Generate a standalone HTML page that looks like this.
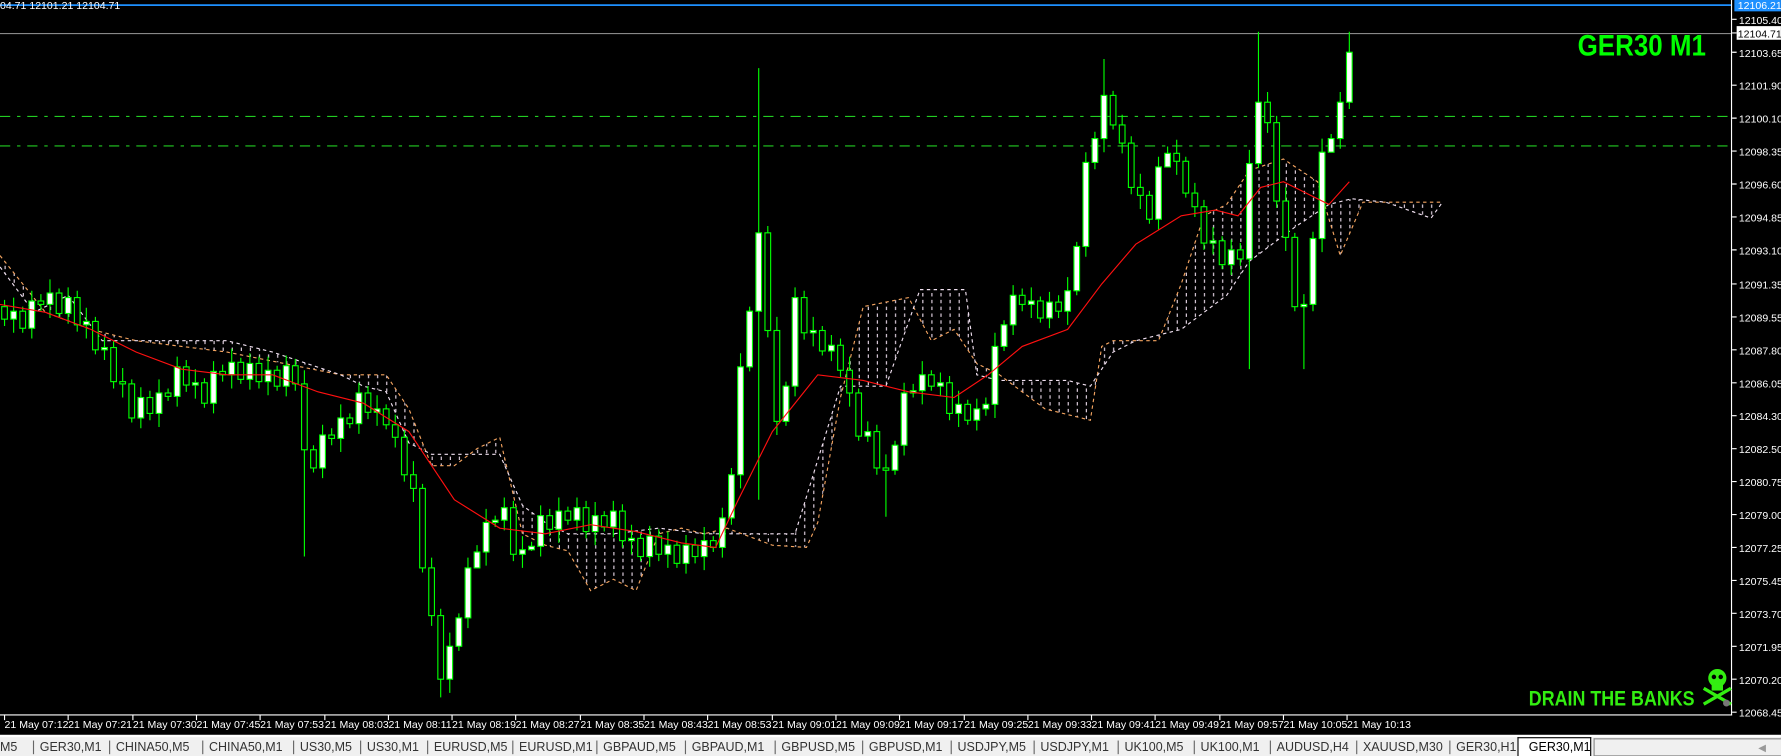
<!DOCTYPE html>
<html><head><meta charset="utf-8"><style>
body{margin:0;background:#000;width:1781px;height:754px;overflow:hidden;font-family:"Liberation Sans",sans-serif}
#w{position:absolute;left:0;top:0;width:1568px;height:664px;transform:scale(1.1358);transform-origin:0 0}
svg{position:absolute;left:0;top:0}
#tabs{position:absolute;left:0;top:647px;width:1568px;height:17px;background:#f0f0f0;border-top:2px solid #fff}
.t{position:absolute;top:1px;font-size:11px;color:#333;height:16px;line-height:16px;white-space:nowrap}
.s{position:absolute;top:3px;width:1px;height:12px;background:#666}
.ax text{fill:#fff;font-size:9.3px;font-family:"Liberation Sans",sans-serif}
.cd rect{stroke:#00ff00;stroke-width:1;fill:#000}
.cd rect.u{fill:#fff}
</style></head><body><div id="w">
<svg width="1568" height="648" xmlns="http://www.w3.org/2000/svg">
<defs><pattern id="h" width="8" height="6" patternUnits="userSpaceOnUse"><rect x="4" y="0" width="1" height="3" fill="#e8d8e8"/></pattern></defs>
<line x1="0" y1="4.5" x2="1524" y2="4.5" stroke="#1e90ff" stroke-width="1.5"/>
<line x1="0" y1="29.5" x2="1524" y2="29.5" stroke="#888"/>
<line x1="0" y1="102.5" x2="1524" y2="102.5" stroke="#22cc22" stroke-dasharray="9,6,3,6"/>
<line x1="0" y1="128.5" x2="1524" y2="128.5" stroke="#22cc22" stroke-dasharray="9,6,3,6"/>
<polygon fill="url(#h)" points="0,225 20,250 40,275 80,290 120,300 200,310 260,322 300,330 340,330 360,360 380,410 400,410 420,395 440,385 460,470 480,480 500,485 520,520 540,510 560,520 580,470 600,465 620,470 640,465 680,480 710,482 720,460 740,350 760,270 800,262 820,300 840,290 860,320 880,330 920,360 960,370 970,305 980,300 1020,300 1040,250 1060,190 1080,180 1100,150 1130,140 1160,160 1180,225 1200,178 1250,178 1270,178 1260,192 1220,178 1190,175 1170,180 1140,200 1100,230 1080,260 1040,290 1000,300 980,310 960,340 940,335 880,335 860,330 850,255 810,255 780,340 740,340 700,470 650,470 620,470 580,465 540,470 500,470 480,460 460,445 440,400 400,400 380,400 360,390 340,345 320,340 300,330 270,320 240,310 200,300 90,300 60,260 30,275 0,235"/>
<polyline fill="none" stroke="#f4a460" stroke-dasharray="3,3" points="0,225 20,250 40,275 80,290 120,300 200,310 260,322 300,330 340,330 360,360 380,410 400,410 420,395 440,385 460,470 480,480 500,485 520,520 540,510 560,520 580,470 600,465 620,470 640,465 680,480 710,482 720,460 740,350 760,270 800,262 820,300 840,290 860,320 880,330 920,360 960,370 970,305 980,300 1020,300 1040,250 1060,190 1080,180 1100,150 1130,140 1160,160 1180,225 1200,178 1250,178 1270,178"/>
<polyline fill="none" stroke="#f0e0f0" stroke-dasharray="3,3" points="0,235 30,275 60,260 90,300 200,300 240,310 270,320 300,330 320,340 340,345 360,390 380,400 400,400 440,400 460,445 480,460 500,470 540,470 580,465 620,470 650,470 700,470 740,340 780,340 810,255 850,255 860,330 880,335 940,335 960,340 980,310 1000,300 1040,290 1080,260 1100,230 1140,200 1170,180 1190,175 1220,178 1260,192 1270,178"/>
<path stroke="#00ff00" stroke-width="1" fill="none" d="M4 264V287M12 262V293M20 270V293M28 256V298M36 259V274M44 246V280M52 254V280M60 253V285M68 256V292M76 271V298M84 279V312M92 297V317M100 300V342M108 324V350M116 334V372M124 341V377M132 344V370M140 334V376M148 342V353M156 314V358M164 317V345M172 325V351M180 333V359M188 318V364M196 321V336M204 307V342M212 315V338M220 311V343M228 314V342M236 314V348M244 322V344M252 313V349M260 316V344M268 326V490M276 392V416M284 374V421M292 377V392M300 356V398M308 364V377M316 337V382M324 340V369M332 348V375M340 356V378M348 365V394M356 379V424M364 406V442M372 426V504M380 491V551M388 536V614M396 557V610M404 540V573M412 491V553M420 480V492M428 448V498M436 454V464M444 438V467M452 441V494M460 472V500M468 477V485M476 445V490M484 448V472M492 438V478M500 446V462M508 438V467M516 441V474M524 442V480M532 450V468M540 441V473M548 444V482M556 462V488M564 470V494M572 463V499M580 466V494M588 468V500M596 476V500M604 471V505M612 474V496M620 464V502M628 472V486M636 447V491M644 412V462M652 311V430M660 270V327M668 60V440M676 199V297M684 279V383M692 336V375M700 253V349M708 256V299M716 279V305M724 287V313M732 295V318M740 298V332M748 314V358M756 342V388M764 371V389M772 374V418M780 400V455M788 388V418M796 337V401M804 338V350M812 318V356M820 326V344M828 328V349M836 331V370M844 344V376M852 352V374M860 351V379M868 350V366M876 293V368M884 282V309M892 251V295M900 254V274M908 253V280M916 261V284M924 257V289M932 260V280M940 244V286M948 213V260M956 134V226M964 116V149M972 52V134M980 80V114M988 101V135M996 120V171M1004 153V184M1012 168V197M1020 138V202M1028 129V141M1036 123V154M1044 138V174M1052 161V191M1060 176V220M1068 200V224M1076 208V237M1084 211V242M1092 214V234M1100 132V325M1108 28V148M1116 81V117M1124 102V183M1132 165V221M1140 205V274M1148 259V325M1156 204V274M1164 122V222M1172 118V126M1180 81V131M1188 28V96"/>
<g class="cd">
<rect x="1.5" y="270" width="5" height="11"/><rect class="u" x="9.5" y="274" width="5" height="7"/><rect x="17.5" y="274" width="5" height="15"/><rect class="u" x="25.5" y="265" width="5" height="24"/><rect x="33.5" y="265" width="5" height="3"/><rect class="u" x="41.5" y="258" width="5" height="10"/><rect x="49.5" y="258" width="5" height="18"/><rect class="u" x="57.5" y="262" width="5" height="14"/><rect x="65.5" y="262" width="5" height="24"/><rect class="u" x="73.5" y="283" width="5" height="3"/><rect x="81.5" y="283" width="5" height="25"/><rect class="u" x="89.5" y="306" width="5" height="2"/><rect x="97.5" y="306" width="5" height="30"/><rect x="105.5" y="336" width="5" height="2"/><rect x="113.5" y="338" width="5" height="30"/><rect class="u" x="121.5" y="350" width="5" height="18"/><rect x="129.5" y="350" width="5" height="14"/><rect class="u" x="137.5" y="346" width="5" height="18"/><rect x="145.5" y="346" width="5" height="3"/><rect class="u" x="153.5" y="323" width="5" height="26"/><rect x="161.5" y="323" width="5" height="16"/><rect class="u" x="169.5" y="337" width="5" height="2"/><rect x="177.5" y="337" width="5" height="18"/><rect class="u" x="185.5" y="327" width="5" height="28"/><rect x="193.5" y="327" width="5" height="3"/><rect class="u" x="201.5" y="319" width="5" height="11"/><rect x="209.5" y="319" width="5" height="15"/><rect class="u" x="217.5" y="320" width="5" height="14"/><rect x="225.5" y="320" width="5" height="16"/><rect class="u" x="233.5" y="326" width="5" height="10"/><rect x="241.5" y="326" width="5" height="14"/><rect class="u" x="249.5" y="322" width="5" height="18"/><rect x="257.5" y="322" width="5" height="16"/><rect x="265.5" y="338" width="5" height="58"/><rect x="273.5" y="396" width="5" height="16"/><rect class="u" x="281.5" y="383" width="5" height="29"/><rect x="289.5" y="383" width="5" height="3"/><rect class="u" x="297.5" y="368" width="5" height="18"/><rect x="305.5" y="368" width="5" height="5"/><rect class="u" x="313.5" y="346" width="5" height="27"/><rect x="321.5" y="346" width="5" height="17"/><rect class="u" x="329.5" y="360" width="5" height="3"/><rect x="337.5" y="360" width="5" height="14"/><rect x="345.5" y="374" width="5" height="11"/><rect x="353.5" y="385" width="5" height="33"/><rect x="361.5" y="418" width="5" height="12"/><rect x="369.5" y="430" width="5" height="70"/><rect x="377.5" y="500" width="5" height="42"/><rect x="385.5" y="542" width="5" height="56"/><rect class="u" x="393.5" y="569" width="5" height="29"/><rect class="u" x="401.5" y="544" width="5" height="25"/><rect class="u" x="409.5" y="500" width="5" height="44"/><rect class="u" x="417.5" y="486" width="5" height="14"/><rect class="u" x="425.5" y="460" width="5" height="26"/><rect class="u" x="433.5" y="458" width="5" height="2"/><rect class="u" x="441.5" y="447" width="5" height="11"/><rect x="449.5" y="447" width="5" height="41"/><rect class="u" x="457.5" y="484" width="5" height="4"/><rect class="u" x="465.5" y="481" width="5" height="3"/><rect class="u" x="473.5" y="454" width="5" height="27"/><rect x="481.5" y="454" width="5" height="12"/><rect class="u" x="489.5" y="450" width="5" height="16"/><rect x="497.5" y="450" width="5" height="8"/><rect class="u" x="505.5" y="447" width="5" height="11"/><rect x="513.5" y="447" width="5" height="21"/><rect class="u" x="521.5" y="454" width="5" height="14"/><rect x="529.5" y="454" width="5" height="10"/><rect class="u" x="537.5" y="450" width="5" height="14"/><rect x="545.5" y="450" width="5" height="26"/><rect class="u" x="553.5" y="474" width="5" height="2"/><rect x="561.5" y="474" width="5" height="16"/><rect class="u" x="569.5" y="472" width="5" height="18"/><rect x="577.5" y="472" width="5" height="16"/><rect class="u" x="585.5" y="480" width="5" height="8"/><rect x="593.5" y="480" width="5" height="16"/><rect class="u" x="601.5" y="480" width="5" height="16"/><rect x="609.5" y="480" width="5" height="10"/><rect class="u" x="617.5" y="476" width="5" height="14"/><rect x="625.5" y="476" width="5" height="6"/><rect class="u" x="633.5" y="456" width="5" height="26"/><rect class="u" x="641.5" y="418" width="5" height="38"/><rect class="u" x="649.5" y="323" width="5" height="95"/><rect class="u" x="657.5" y="274" width="5" height="49"/><rect class="u" x="665.5" y="205" width="5" height="69"/><rect x="673.5" y="205" width="5" height="86"/><rect x="681.5" y="291" width="5" height="80"/><rect class="u" x="689.5" y="340" width="5" height="31"/><rect class="u" x="697.5" y="262" width="5" height="78"/><rect x="705.5" y="262" width="5" height="31"/><rect class="u" x="713.5" y="291" width="5" height="2"/><rect x="721.5" y="291" width="5" height="18"/><rect class="u" x="729.5" y="304" width="5" height="5"/><rect x="737.5" y="304" width="5" height="22"/><rect x="745.5" y="326" width="5" height="20"/><rect x="753.5" y="346" width="5" height="38"/><rect class="u" x="761.5" y="380" width="5" height="4"/><rect x="769.5" y="380" width="5" height="32"/><rect x="777.5" y="412" width="5" height="2"/><rect class="u" x="785.5" y="392" width="5" height="22"/><rect class="u" x="793.5" y="346" width="5" height="46"/><rect class="u" x="801.5" y="344" width="5" height="2"/><rect class="u" x="809.5" y="330" width="5" height="14"/><rect x="817.5" y="330" width="5" height="10"/><rect class="u" x="825.5" y="337" width="5" height="3"/><rect x="833.5" y="337" width="5" height="27"/><rect class="u" x="841.5" y="356" width="5" height="8"/><rect x="849.5" y="356" width="5" height="14"/><rect class="u" x="857.5" y="360" width="5" height="10"/><rect class="u" x="865.5" y="356" width="5" height="4"/><rect class="u" x="873.5" y="305" width="5" height="51"/><rect class="u" x="881.5" y="286" width="5" height="19"/><rect class="u" x="889.5" y="260" width="5" height="26"/><rect x="897.5" y="260" width="5" height="8"/><rect class="u" x="905.5" y="265" width="5" height="3"/><rect x="913.5" y="265" width="5" height="15"/><rect class="u" x="921.5" y="266" width="5" height="14"/><rect x="929.5" y="266" width="5" height="8"/><rect class="u" x="937.5" y="256" width="5" height="18"/><rect class="u" x="945.5" y="217" width="5" height="39"/><rect class="u" x="953.5" y="143" width="5" height="74"/><rect class="u" x="961.5" y="122" width="5" height="21"/><rect class="u" x="969.5" y="84" width="5" height="38"/><rect x="977.5" y="84" width="5" height="26"/><rect x="985.5" y="110" width="5" height="16"/><rect x="993.5" y="126" width="5" height="39"/><rect x="1001.5" y="165" width="5" height="7"/><rect x="1009.5" y="172" width="5" height="21"/><rect class="u" x="1017.5" y="147" width="5" height="46"/><rect class="u" x="1025.5" y="135" width="5" height="12"/><rect x="1033.5" y="135" width="5" height="7"/><rect x="1041.5" y="142" width="5" height="28"/><rect x="1049.5" y="170" width="5" height="12"/><rect x="1057.5" y="182" width="5" height="32"/><rect class="u" x="1065.5" y="212" width="5" height="2"/><rect x="1073.5" y="212" width="5" height="21"/><rect class="u" x="1081.5" y="220" width="5" height="13"/><rect x="1089.5" y="220" width="5" height="8"/><rect class="u" x="1097.5" y="144" width="5" height="84"/><rect class="u" x="1105.5" y="90" width="5" height="54"/><rect x="1113.5" y="90" width="5" height="18"/><rect x="1121.5" y="108" width="5" height="69"/><rect x="1129.5" y="177" width="5" height="32"/><rect x="1137.5" y="209" width="5" height="61"/><rect class="u" x="1145.5" y="268" width="5" height="2"/><rect class="u" x="1153.5" y="210" width="5" height="58"/><rect class="u" x="1161.5" y="134" width="5" height="76"/><rect class="u" x="1169.5" y="122" width="5" height="12"/><rect class="u" x="1177.5" y="90" width="5" height="32"/><rect class="u" x="1185.5" y="46" width="5" height="44"/>
</g>
<polyline fill="none" stroke="#ff1010" stroke-width="1" points="0,268 40,275 80,290 120,310 160,325 200,330 240,330 280,345 320,355 360,380 400,440 440,465 480,470 520,462 560,468 600,478 630,482 650,440 680,380 720,330 760,335 800,345 840,350 870,330 900,305 940,290 970,250 1000,215 1040,190 1070,185 1090,190 1110,165 1130,160 1150,170 1170,180 1188,160"/>
<line x1="1524.5" y1="0" x2="1524.5" y2="630" stroke="#fff"/>
<line x1="0" y1="629.5" x2="1525" y2="629.5" stroke="#fff"/>
<g class="ax">
<path stroke="#fff" d="M1525 17H1529M1525 29H1529M1525 46H1529M1525 75H1529M1525 104H1529M1525 133H1529M1525 162H1529M1525 191H1529M1525 220H1529M1525 250H1529M1525 279H1529M1525 308H1529M1525 337H1529M1525 366H1529M1525 395H1529M1525 424H1529M1525 453H1529M1525 482H1529M1525 511H1529M1525 540H1529M1525 569H1529M1525 598H1529M1525 627H1529"/>
<rect x="1527" y="-1" width="54" height="11" fill="#1e90ff"/><text x="1530" y="8">12106.21</text>
<text x="1531" y="21">12105.40</text>
<rect x="1529" y="23" width="51" height="12" fill="#fff"/><text x="1530" y="33" style="fill:#000">12104.71</text>
<text x="1531" y="50">12103.65</text><text x="1531" y="79">12101.90</text><text x="1531" y="108">12100.10</text><text x="1531" y="137">12098.35</text><text x="1531" y="166">12096.60</text><text x="1531" y="195">12094.85</text><text x="1531" y="224">12093.10</text><text x="1531" y="254">12091.35</text><text x="1531" y="283">12089.55</text><text x="1531" y="312">12087.80</text><text x="1531" y="341">12086.05</text><text x="1531" y="370">12084.30</text><text x="1531" y="399">12082.50</text><text x="1531" y="428">12080.75</text><text x="1531" y="457">12079.00</text><text x="1531" y="486">12077.25</text><text x="1531" y="515">12075.45</text><text x="1531" y="544">12073.70</text><text x="1531" y="573">12071.95</text><text x="1531" y="602">12070.20</text><text x="1531" y="631">12068.45</text>
<text x="0" y="8">04.71 12101.21 12104.71</text>
<path stroke="#fff" d="M4 630V634M60 630V634M117 630V634M173 630V634M229 630V634M286 630V634M342 630V634M398 630V634M454 630V634M511 630V634M567 630V634M623 630V634M680 630V634M736 630V634M792 630V634M849 630V634M905 630V634M961 630V634M1017 630V634M1074 630V634M1130 630V634M1186 630V634"/>
<text x="4" y="641">21 May 07:12</text><text x="60" y="641">21 May 07:21</text><text x="117" y="641">21 May 07:30</text><text x="173" y="641">21 May 07:45</text><text x="229" y="641">21 May 07:53</text><text x="286" y="641">21 May 08:03</text><text x="342" y="641">21 May 08:11</text><text x="398" y="641">21 May 08:19</text><text x="454" y="641">21 May 08:27</text><text x="511" y="641">21 May 08:35</text><text x="567" y="641">21 May 08:43</text><text x="623" y="641">21 May 08:53</text><text x="680" y="641">21 May 09:01</text><text x="736" y="641">21 May 09:09</text><text x="792" y="641">21 May 09:17</text><text x="849" y="641">21 May 09:25</text><text x="905" y="641">21 May 09:33</text><text x="961" y="641">21 May 09:41</text><text x="1017" y="641">21 May 09:49</text><text x="1074" y="641">21 May 09:57</text><text x="1130" y="641">21 May 10:05</text><text x="1186" y="641">21 May 10:13</text>
</g>
<text x="1389" y="49" fill="#00ff00" font-size="26" font-weight="bold" font-family="Liberation Sans, sans-serif" textLength="113" lengthAdjust="spacingAndGlyphs">GER30 M1</text>
<text x="1346" y="621" fill="#33ee11" font-size="19" font-weight="bold" font-family="Liberation Sans, sans-serif" textLength="146" lengthAdjust="spacingAndGlyphs">DRAIN THE BANKS</text>
<g fill="#33ee11"><circle cx="1512" cy="597" r="8"/><rect x="1507" y="601" width="10" height="7"/></g>
<line x1="1500" y1="606" x2="1524" y2="620" stroke="#33ee11" stroke-width="3"/><line x1="1524" y1="606" x2="1500" y2="620" stroke="#33ee11" stroke-width="3"/>
<circle cx="1509" cy="596" r="2" fill="#000"/><circle cx="1515" cy="596" r="2" fill="#000"/>
<circle cx="1520" cy="619" r="3" fill="#777"/>
</svg>
<div id="tabs">
<div class="t" style="left:0">M5</div><div class="s" style="left:29px"></div>
<div class="t" style="left:35px">GER30,M1</div><div class="s" style="left:96px"></div>
<div class="t" style="left:102px">CHINA50,M5</div><div class="s" style="left:178px"></div>
<div class="t" style="left:184px">CHINA50,M1</div><div class="s" style="left:258px"></div>
<div class="t" style="left:264px">US30,M5</div><div class="s" style="left:317px"></div>
<div class="t" style="left:323px">US30,M1</div><div class="s" style="left:376px"></div>
<div class="t" style="left:382px">EURUSD,M5</div><div class="s" style="left:451px"></div>
<div class="t" style="left:457px">EURUSD,M1</div><div class="s" style="left:525px"></div>
<div class="t" style="left:531px">GBPAUD,M5</div><div class="s" style="left:603px"></div>
<div class="t" style="left:609px">GBPAUD,M1</div><div class="s" style="left:682px"></div>
<div class="t" style="left:688px">GBPUSD,M5</div><div class="s" style="left:759px"></div>
<div class="t" style="left:765px">GBPUSD,M1</div><div class="s" style="left:837px"></div>
<div class="t" style="left:843px">USDJPY,M5</div><div class="s" style="left:910px"></div>
<div class="t" style="left:916px">USDJPY,M1</div><div class="s" style="left:984px"></div>
<div class="t" style="left:990px">UK100,M5</div><div class="s" style="left:1051px"></div>
<div class="t" style="left:1057px">UK100,M1</div><div class="s" style="left:1118px"></div>
<div class="t" style="left:1124px">AUDUSD,H4</div><div class="s" style="left:1194px"></div>
<div class="t" style="left:1200px">XAUUSD,M30</div><div class="s" style="left:1276px"></div>
<div class="t" style="left:1282px">GER30,H1</div>
<div style="position:absolute;left:1336px;top:0;width:65px;height:17px;background:#fff;border:1px solid #000;border-bottom:none;box-sizing:border-box"></div>
<div class="t" style="left:1346px;color:#000">GER30,M1</div>
<div style="position:absolute;left:1403px;top:1px;width:165px;height:16px;border:1px solid #888;border-right:none;box-sizing:border-box;background:#f0f0f0"></div>
<div class="t" style="left:1548px;color:#999;font-size:9px">&#9664;</div>
</div>
</div></body></html>
